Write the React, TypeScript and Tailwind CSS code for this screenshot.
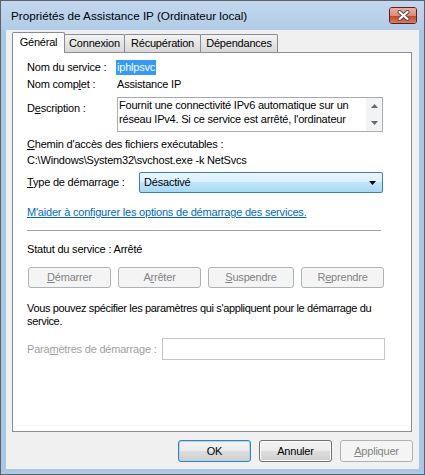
import React from "react";

const U = ({ children }: { children: React.ReactNode }) => (
  <span className="underline underline-offset-[1px]">{children}</span>
);

function DisabledBtn({ w, children }: { w: string; children: React.ReactNode }) {
  return (
    <div
      className={`${w} h-[21px] rounded-[3px] border border-[#adb2b5] bg-[#f4f4f4] text-[#838383] flex items-center justify-center`}
    >
      {children}
    </div>
  );
}

export default function App() {
  return (
    <div className="w-[425px] h-[475px] border border-[#5e6268] bg-[#a9c8e8] flex flex-col font-['Liberation_Sans',Arial,sans-serif] text-[11px] text-black select-none">
      {/* Title bar */}
      <div className="h-[29px] flex items-start pl-[10px] pr-[7px] bg-gradient-to-b from-[#c3d8ee] to-[#b1cbe7]">
        <div className="h-[29px] flex items-center text-[11.7px] text-black">
          Propriétés de Assistance IP (Ordinateur local)
        </div>
        <div className="ml-auto mt-[6px] w-[28px] h-[17px] rounded-[3px] border border-[#5a1e24] overflow-hidden flex flex-col relative">
          <div className="h-[8px] bg-gradient-to-b from-[#eab0a2] to-[#e0876f]" />
          <div className="flex-1 bg-gradient-to-b from-[#c9431d] to-[#dd7a58]" />
          <svg
            className="absolute left-[7px] top-[2px]"
            width="13"
            height="11"
            viewBox="0 0 13 11"
          >
            <path d="M2.5 2 L10.5 9 M10.5 2 L2.5 9" stroke="#4a4a4a" strokeWidth="4" strokeLinecap="round" />
            <path d="M2.5 2 L10.5 9 M10.5 2 L2.5 9" stroke="#ffffff" strokeWidth="2.2" strokeLinecap="round" />
          </svg>
        </div>
      </div>

      {/* Client area */}
      <div className="mx-[5px] mb-[5px] flex-1 bg-[#f0f0f0] flex flex-col tracking-[-0.2px]">
        <div className="ml-[6px] mt-[2px] w-[400px]">
          {/* Tabs */}
          <div className="flex items-end h-[20px]">
            <div className="relative z-10 w-[53px] h-[21px] -mb-px bg-white border border-b-0 border-[#898c95] rounded-t-[2px] flex items-center justify-center pb-[2px]">
              Général
            </div>
            <div className="-ml-px w-[61px] h-[18px] border border-b-0 border-[#898c95] rounded-t-[2px] bg-gradient-to-b from-[#f3f3f3] to-[#d8d8d8] flex items-center justify-center">
              Connexion
            </div>
            <div className="-ml-px w-[77px] h-[18px] border border-b-0 border-[#898c95] rounded-t-[2px] bg-gradient-to-b from-[#f3f3f3] to-[#d8d8d8] flex items-center justify-center">
              Récupération
            </div>
            <div className="-ml-px w-[78px] h-[18px] border border-b-0 border-[#898c95] rounded-t-[2px] bg-gradient-to-b from-[#f3f3f3] to-[#d8d8d8] flex items-center justify-center">
              Dépendances
            </div>
          </div>

          {/* Panel */}
          <div className="h-[380px] bg-white border border-[#898c95] pl-[14px] pt-[6px] flex flex-col">
            <div className="h-[17px] flex items-center">
              <div className="w-[90px]">Nom du service :</div>
              <span className="h-[15px] leading-[15px] bg-[#3399ff] text-white px-[1px] -ml-[1px]">iphlpsvc</span>
            </div>
            <div className="h-[17px] flex items-center">
              <div className="w-[90px]">
                Nom comp<U>l</U>et :
              </div>
              <span>Assistance IP</span>
            </div>
            <div className="mt-[4px] flex items-start">
              <div className="w-[90px] mt-[3px] leading-[16px]">
                D<U>e</U>scription :
              </div>
              <div className="w-[266px] h-[35px] border border-[#abadb3] border-t-[#a5a8ae] bg-white flex">
                <div className="flex-1 pl-[1px] leading-[14px] text-black">
                  Fournit une connectivité IPv6 automatique sur un
                  <br />
                  réseau IPv4. Si ce service est arrêté, l'ordinateur
                </div>
                <div className="w-[16px] bg-[#f3f3f3] flex flex-col items-center justify-between py-[6px]">
                  <svg width="7" height="4" viewBox="0 0 7 4">
                    <path d="M3.5 0 L7 4 L0 4 Z" fill="#5c6b7e" />
                  </svg>
                  <svg width="7" height="4" viewBox="0 0 7 4">
                    <path d="M0 0 L7 0 L3.5 4 Z" fill="#5c6b7e" />
                  </svg>
                </div>
              </div>
            </div>
            <div className="mt-[4px] h-[16px] flex items-center">
              <U>C</U>hemin d'accès des fichiers exécutables :
            </div>
            <div className="h-[16px] flex items-center">C:\Windows\System32\svchost.exe -k NetSvcs</div>
            <div className="mt-[4px] h-[21px] flex items-center">
              <div className="w-[112px]">
                <U>T</U>ype de démarrage :
              </div>
              <div className="w-[244px] h-[21px] rounded-[2px] border border-[#3c7fb1] bg-[linear-gradient(to_bottom,#eaf6fd_0%,#d9f0fc_50%,#bee6fd_50%,#a7d9f5_100%)] flex items-center pl-[4px] pr-[6px]">
                <span>Désactivé</span>
                <svg className="ml-auto" width="7" height="4" viewBox="0 0 7 4">
                  <path d="M0 0 L7 0 L3.5 4 Z" fill="#000" />
                </svg>
              </div>
            </div>
            <div className="mt-[11px] h-[16px] flex items-center">
              <span className="text-[#0066cc] underline underline-offset-[1px]">
                M'aider à configurer les options de démarrage des services.
              </span>
            </div>
            <div className="mt-[10px] w-[354px] h-px bg-[#a0a0a0]" />
            <div className="mt-[10px] h-[16px] flex items-center">Statut du service : Arrêté</div>
            <div className="mt-[10px] ml-[1px] flex gap-[7px]">
              <DisabledBtn w="w-[83px]">
                <U>D</U>émarrer
              </DisabledBtn>
              <DisabledBtn w="w-[83px]">
                A<U>r</U>rêter
              </DisabledBtn>
              <DisabledBtn w="w-[86px]">
                <U>S</U>uspendre
              </DisabledBtn>
              <DisabledBtn w="w-[83px]">
                R<U>e</U>prendre
              </DisabledBtn>
            </div>
            <div className="mt-[14px] leading-[13px] whitespace-nowrap tracking-[-0.35px]">
              Vous pouvez spécifier les paramètres qui s'appliquent pour le démarrage du
              <br />
              service.
            </div>
            <div className="mt-[10px] h-[22px] flex items-center">
              <div className="w-[135px] text-[#a0a0a0]">
                Para<U>m</U>ètres de démarrage :
              </div>
              <div className="w-[223px] h-[22px] border border-[#c4c6ca] bg-white" />
            </div>
          </div>
        </div>

        {/* Bottom buttons */}
        <div className="mt-[8px] flex justify-end gap-[8px] pr-[6px]">
          <div className="w-[73px] h-[22px] rounded-[3px] border border-[#3c7fb1] shadow-[inset_0_0_0_1px_#a8d8f3] bg-[linear-gradient(to_bottom,#f2f2f2_0%,#ebebeb_50%,#dddddd_50%,#cfcfcf_100%)] flex items-center justify-center">
            OK
          </div>
          <div className="w-[73px] h-[22px] rounded-[3px] border border-[#707070] shadow-[inset_0_0_0_1px_#fbfbfb] bg-[linear-gradient(to_bottom,#f2f2f2_0%,#ebebeb_50%,#dddddd_50%,#cfcfcf_100%)] flex items-center justify-center">
            Annuler
          </div>
          <div className="w-[73px] h-[22px] rounded-[3px] border border-[#adb2b5] bg-[#f4f4f4] text-[#838383] flex items-center justify-center">
            <U>A</U>ppliquer
          </div>
        </div>
      </div>
    </div>
  );
}
